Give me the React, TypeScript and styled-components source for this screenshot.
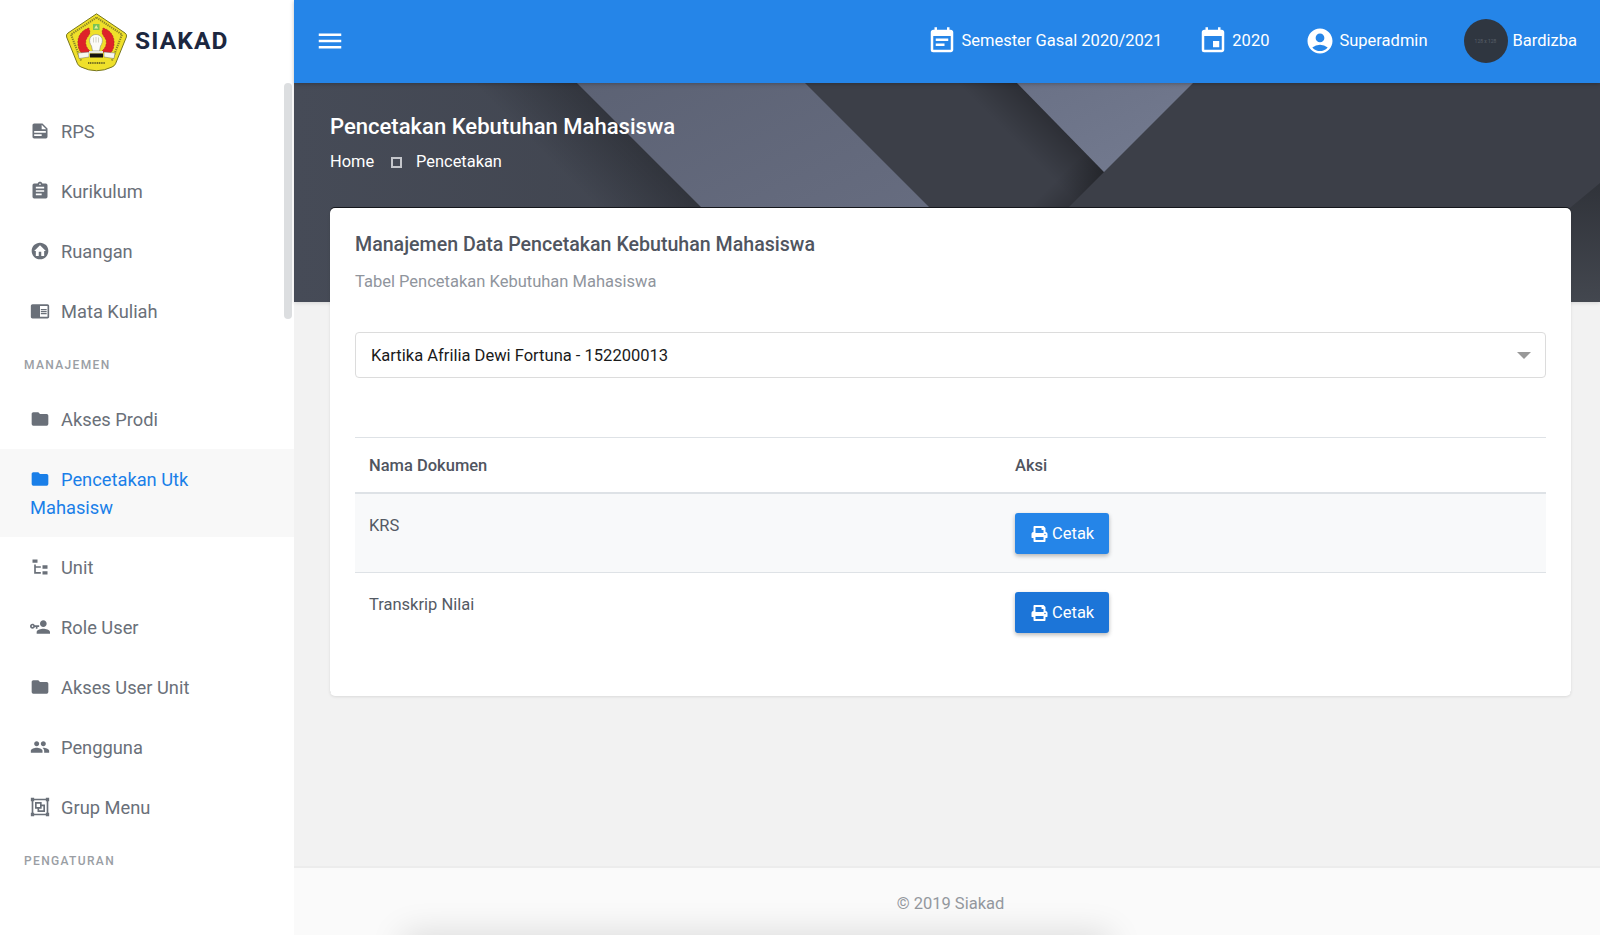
import React from "react";
import styled, { createGlobalStyle } from "styled-components";
import { MdEventNote, MdEvent, MdAccountCircle, MdMenu } from "react-icons/md";
import { FaPrint } from "react-icons/fa";

const Global = createGlobalStyle`
  html, body { margin: 0; padding: 0; background: #f2f2f2; }
  body { font-family: Roboto, "Liberation Sans", sans-serif; font-size: 16px; }
  * { box-sizing: border-box; }
`;

const Shell = styled.div`
  display: flex;
  width: 100%;
  height: 935px;
  overflow: hidden;
`;

const Sidebar = styled.aside`
  position: relative;
  flex: 0 0 294px;
  height: 935px;
  background: #fff;
  overflow: hidden;
`;

const Brand = styled.div`
  display: flex;
  align-items: center;
  gap: 7px;
  height: 83px;
  padding-left: 65px;
`;

const BrandLogo = styled.svg`
  display: block;
  width: 63px;
  height: 62px;
  margin-top: 3px;
`;

const BrandName = styled.span`
  margin-bottom: 3px;
  font-size: 24.5px;
  font-weight: 700;
  letter-spacing: 1.1px;
  color: #1c2740;
`;

const Nav = styled.nav`
  padding-top: 18px;
`;

const NavItem = styled.div<{ $active?: boolean }>`
  padding: 17px ${(p) => (p.$active ? "80px" : "20px")} 15px 30px;
  font-size: 18.3px;
  line-height: 28px;
  color: ${(p) => (p.$active ? "#1a7fe8" : "#6a7079")};
  background: ${(p) => (p.$active ? "#f8f8f8" : "transparent")};
`;

const NavGlyph = styled.svg`
  display: inline-block;
  width: 20px;
  height: 20px;
  margin-right: 11px;
  vertical-align: -3px;
  fill: currentColor;
`;

const NavSection = styled.div`
  height: 48px;
  padding-left: 24px;
  font-size: 12px;
  font-weight: 500;
  line-height: 48px;
  letter-spacing: 1.35px;
  text-transform: uppercase;
  color: #9a9ea4;
`;

const ScrollThumb = styled.div`
  position: absolute;
  top: 83px;
  right: 2px;
  width: 8px;
  height: 236px;
  border-radius: 4px;
  background: #dcdee0;
`;

const Main = styled.div`
  flex: 1 1 auto;
  min-width: 0;
  display: flex;
  flex-direction: column;
  height: 935px;
`;

const Topbar = styled.header`
  position: relative;
  z-index: 2;
  flex: 0 0 83px;
  display: flex;
  align-items: center;
  justify-content: space-between;
  padding: 0 23px 2px 21px;
  background: #2585e8;
  color: #fff;
  box-shadow: 0 1px 4px rgba(0, 0, 0, 0.25);
`;

const MenuIcon = styled(MdMenu)`
  width: 30px;
  height: 30px;
  display: block;
`;

const TopActions = styled.div`
  display: flex;
  align-items: center;
  gap: 36px;
`;

const TopItem = styled.div`
  display: flex;
  align-items: center;
  gap: 4px;
  font-size: 16.5px;
  svg {
    width: 30px;
    height: 30px;
    display: block;
  }
`;

const UserItem = styled.div`
  display: flex;
  align-items: center;
  gap: 5px;
  font-size: 16.5px;
`;

const Avatar = styled.div`
  width: 44px;
  height: 44px;
  border-radius: 50%;
  background: #2f3640;
  color: #59606a;
  font-size: 5px;
  display: flex;
  align-items: center;
  justify-content: center;
`;

const Hero = styled.section`
  position: relative;
  flex: 0 0 219px;
  padding: 29px 36px 0;
  background: #3c3f48;
  color: #fff;
  overflow: hidden;
  box-shadow: 0 1px 4px rgba(0, 0, 0, 0.12);
`;

const HeroArt = styled.svg`
  position: absolute;
  left: 0;
  top: 0;
  width: 1306px;
  height: 219px;
`;

const HeroTitle = styled.h1`
  position: relative;
  margin: 0;
  font-size: 22.05px;
  font-weight: 500;
  line-height: 30px;
`;

const Crumbs = styled.div`
  position: relative;
  display: flex;
  align-items: center;
  margin-top: 8px;
  font-size: 16.4px;
  line-height: 24px;
`;

const CrumbSeparator = styled.span`
  width: 11px;
  height: 11px;
  margin: 0 14px 0 17px;
  border: 2px solid #c4c6cb;
`;

const Card = styled.section`
  position: relative;
  z-index: 1;
  margin: -94px 29px 0 36px;
  padding: 25px;
  height: 488px;
  background: #fff;
  border-radius: 5px;
  box-shadow: 0 -1px 0 #15171c, 0 1px 3px rgba(0, 0, 0, 0.1);
`;

const CardTitle = styled.h2`
  margin: 0;
  font-size: 19.6px;
  font-weight: 500;
  line-height: 24px;
  color: #50555f;
`;

const CardSubtitle = styled.p`
  margin: 13px 0 0;
  font-size: 16.5px;
  line-height: 24px;
  color: #90959d;
`;

const SelectBox = styled.div`
  display: flex;
  align-items: center;
  justify-content: space-between;
  height: 46px;
  margin-top: 38px;
  padding: 0 14px 0 15px;
  border: 1px solid #dcdcdc;
  border-radius: 4px;
  font-size: 16.55px;
  color: #1a1a1a;
`;

const Caret = styled.span`
  width: 0;
  height: 0;
  border-left: 7.5px solid transparent;
  border-right: 7.5px solid transparent;
  border-top: 7.5px solid #999;
`;

const DocTable = styled.table`
  width: 100%;
  margin-top: 59px;
  border-collapse: collapse;
  border-top: 1px solid #dee2e6;
  table-layout: fixed;
  font-size: 16.5px;
  color: #545a64;
`;

const HeadCell = styled.th<{ $wide?: boolean }>`
  width: ${(p) => (p.$wide ? "646px" : "auto")};
  height: 55px;
  padding: 2px 14px 0;
  text-align: left;
  font-weight: 500;
  color: #50555f;
  border-bottom: 2px solid #dee2e6;
`;

const Row = styled.tr<{ $shade?: boolean }>`
  background: ${(p) => (p.$shade ? "#f8f9fa" : "transparent")};
  border-bottom: ${(p) => (p.$shade ? "1px solid #dee2e6" : "none")};
`;

const Cell = styled.td`
  padding: 19px 14px 18px;
  line-height: 24px;
  vertical-align: top;
`;

const TextCell = styled(Cell)`
  padding-top: 20px;
  padding-bottom: 17px;
`;

const PrintButton = styled.button<{ $dark?: boolean }>`
  display: flex;
  align-items: center;
  gap: 4px;
  height: 41px;
  width: 94px;
  padding: 1px 0 0 16px;
  border: 0;
  border-radius: 3px;
  background: ${(p) => (p.$dark ? "#1c75d8" : "#2585e8")};
  color: #fff;
  font: 400 16.5px Roboto, "Liberation Sans", sans-serif;
  box-shadow: 0 2px 4px rgba(0, 0, 0, 0.28);
  svg {
    width: 17px;
    height: 16px;
  }
`;

const Footer = styled.footer`
  position: relative;
  margin-top: auto;
  flex: 0 0 69px;
  padding: 24px 0 0 7px;
  background: #fafafa;
  border-top: 2px solid #ececec;
  text-align: center;
  font-size: 16.5px;
  line-height: 24px;
  color: #94989e;
  overflow: hidden;
  &::after {
    content: "";
    position: absolute;
    left: 115px;
    width: 695px;
    bottom: -22px;
    height: 16px;
    box-shadow: 0 0 34px 6px rgba(0, 0, 0, 0.15);
  }
`;

const P = {
  note: "M14,10H19.5L14,4.5V10M5,3H15L21,9V19A2,2 0 0,1 19,21H5C3.89,21 3,20.1 3,19V5C3,3.89 3.89,3 5,3M5,12V14H19V12H5M5,16V18H14V16H5Z",
  clip: "M17,9H7V7H17M17,13H7V11H17M14,17H7V15H14M12,3A1,1 0 0,1 13,4A1,1 0 0,1 12,5A1,1 0 0,1 11,4A1,1 0 0,1 12,3M19,3H14.82C14.4,1.84 13.3,1 12,1C10.7,1 9.6,1.84 9.18,3H5A2,2 0 0,0 3,5V19A2,2 0 0,0 5,21H19A2,2 0 0,0 21,19V5A2,2 0 0,0 19,3Z",
  home: "M19.07,4.93C17.22,3 14.66,1.96 12,2C9.34,1.96 6.79,3 4.94,4.93C3,6.78 1.96,9.34 2,12C1.96,14.66 3,17.21 4.93,19.06C6.78,21 9.34,22.04 12,22C14.66,22.04 17.21,21 19.06,19.07C21,17.22 22.04,14.66 22,12C22.04,9.34 21,6.78 19.07,4.93M17,12V18H13.5V13H10.5V18H7V12H5L12,5L19,12H17Z",
  book: "M13 12h7v1.5h-7zm0-2.5h7V11h-7zm0 5h7V16h-7zM21 4H3c-1.1 0-2 .9-2 2v13c0 1.1.9 2 2 2h18c1.1 0 2-.9 2-2V6c0-1.1-.9-2-2-2zm0 15h-9V6h9v13z",
  folder: "M10,4H4C2.89,4 2,4.89 2,6V18A2,2 0 0,0 4,20H20A2,2 0 0,0 22,18V8C22,6.89 21.1,6 20,6H12L10,4Z",
  tree: "M3,3H9V7H3V3M15,10H21V14H15V10M15,17H21V21H15V17M13,13H7V18H13V20H7L5,20V9H7V11H13V13Z",
  key: "M11 10V12H9V14H7V12H5.8C5.4 13.2 4.3 14 3 14C1.3 14 0 12.7 0 11S1.3 8 3 8C4.3 8 5.4 8.8 5.8 10H11M3 10C2.4 10 2 10.4 2 11S2.4 12 3 12 4 11.6 4 11 3.6 10 3 10M16 14C18.7 14 24 15.3 24 18V20H8V18C8 15.3 13.3 14 16 14M16 12C13.8 12 12 10.2 12 8S13.8 4 16 4 20 5.8 20 8 18.2 12 16 12Z",
  people: "M16 11c1.66 0 2.99-1.34 2.99-3S17.66 5 16 5s-3 1.34-3 3 1.34 3 3 3zm-8 0c1.66 0 2.99-1.34 2.99-3S9.66 5 8 5 5 6.34 5 8s1.34 3 3 3zm0 2c-2.33 0-7 1.17-7 3.5V19h14v-2.5c0-2.33-4.67-3.5-7-3.5zm8 0c-.29 0-.62.02-.97.05 1.16.84 1.97 1.97 1.97 3.45V19h6v-2.5c0-2.33-4.67-3.5-7-3.5z",
  group: "M1,1V5H2V19H1V23H5V22H19V23H23V19H22V5H23V1H19V2H5V1M5,4H19V5H20V19H19V20H5V19H4V5H5M6,6V14H9V18H18V9H14V6M8,8H12V12H8M14,11H16V16H11V14H14",
};

function Item({ icon, label, active }: { icon: string; label: string; active?: boolean }) {
  return (
    <NavItem $active={active}>
      <NavGlyph viewBox="0 0 24 24">
        <path d={icon} />
      </NavGlyph>
      {label}
    </NavItem>
  );
}

function Logo() {
  return (
    <BrandLogo viewBox="0 0 63 60" aria-hidden="true">
      <path
        d="M31.5 .8 L60 20 Q62.2 21.600 61.4 24 L50.5 50.8 Q49.5 53 47 54 Q31.5 61.5 16 54 Q13.500 53 12.500 50.8 L1.600 24 Q.8 21.600 3 20 Z"
        fill="#efe02a"
        stroke="#77761f"
        strokeWidth="1"
      />
      <path
        d="M31.5 4.500 L57 21.500 L47 47.500"
        fill="none"
        stroke="#8a8427"
        strokeWidth="2"
        strokeDasharray="1.300 .9"
      />
      <path
        d="M31.5 4.500 L6 21.500 L16 47.500"
        fill="none"
        stroke="#8a8427"
        strokeWidth="2"
        strokeDasharray="1.300 .9"
      />
      <path d="M28 11h6.500v6H28z" fill="#79c257" />
      <path d="M31.200 12l2 3.500h-4z" fill="#e3efa0" />
      <path
        d="M24 15C16 17 12 24 13 32C13.500 37 16 41 20 42L25 38C21.500 35 20 31 21 27C22 24 25 22 25 19Z"
        fill="#de2229"
        stroke="#9c1a1e"
        strokeWidth=".5"
        strokeDasharray="2 1"
      />
      <path
        d="M38 15C46 17 50 24 49 32C48.500 37 46 41 42 42L37 38C40.500 35 42 31 41 27C40 24 37 22 37 19Z"
        fill="#de2229"
        stroke="#9c1a1e"
        strokeWidth=".5"
        strokeDasharray="2 1"
      />
      <path
        d="M25 25C27 22 29 21.500 31 21.500S35 22 37 25C38 28 37 31 35.500 33L34.500 38H27.500L26.500 33C25 31 24 28 25 25Z"
        fill="#fbfbf6"
        stroke="#8b8b80"
        strokeWidth=".6"
      />
      <path d="M28.500 24.500v5M31 24v5.500M33.500 24.500v5" stroke="#b8b8a8" strokeWidth=".6" />
      <path d="M13 40l11-1v5l-10 1.500zM50 40l-11-1v5l10 1.500z" fill="#f7f7ee" stroke="#555" strokeWidth=".4" />
      <path d="M24 38h14v2.500H24z" fill="#e9e9df" />
      <path d="M25 40.500h13v4H25z" fill="#16130f" />
      <path d="M23 50h17" stroke="#4d4b1e" strokeWidth="1.600" strokeDasharray="1.200 .6" />
    </BrandLogo>
  );
}

function HeroBackdrop() {
  return (
    <HeroArt viewBox="0 0 1306 219" aria-hidden="true">
      <defs>
        <linearGradient id="baseLeft" x1="0" y1="0" x2="1" y2="0">
          <stop offset="0" stopColor="#464b57" />
          <stop offset="1" stopColor="#3f434d" />
        </linearGradient>
        <linearGradient id="edgeA" gradientUnits="userSpaceOnUse" x1="392" y1="110" x2="340" y2="162">
          <stop offset="0" stopColor="#000" stopOpacity=".24" />
          <stop offset="1" stopColor="#000" stopOpacity="0" />
        </linearGradient>
        <linearGradient id="edgeB" gradientUnits="userSpaceOnUse" x1="767" y1="44" x2="737" y2="74">
          <stop offset="0" stopColor="#000" stopOpacity=".26" />
          <stop offset="1" stopColor="#000" stopOpacity="0" />
        </linearGradient>
        <linearGradient id="edgeC" gradientUnits="userSpaceOnUse" x1="775" y1="124" x2="755" y2="104">
          <stop offset="0" stopColor="#000" stopOpacity=".2" />
          <stop offset="1" stopColor="#000" stopOpacity="0" />
        </linearGradient>
        <linearGradient id="shapeA" x1="0" y1="0" x2="1" y2="1">
          <stop offset="0" stopColor="#5c6274" />
          <stop offset="1" stopColor="#6b7185" />
        </linearGradient>
        <linearGradient id="shapeB" x1="0" y1="0" x2="1" y2="1">
          <stop offset="0" stopColor="#6a7186" />
          <stop offset="1" stopColor="#747b90" />
        </linearGradient>
        <linearGradient id="cornerFade" x1="0" y1="0" x2="0" y2="1">
          <stop offset="0" stopColor="#30333a" />
          <stop offset="1" stopColor="#43474f" />
        </linearGradient>
      </defs>
      <polygon points="0,0 283,0 502,219 0,219" fill="url(#baseLeft)" />
      <polygon points="0,0 283,0 502,219 0,219" fill="url(#edgeA)" />
      <polygon points="640,0 723,0 810,89 680,219 500,219" fill="url(#edgeB)" />
      <polygon points="640,0 723,0 810,89 680,219 500,219" fill="url(#edgeC)" />
      <polygon points="1306,100 1306,219 1170,219 1277,124" fill="url(#cornerFade)" />
      <polygon points="283,0 511,0 730,219 502,219" fill="url(#shapeA)" />
      <polygon points="723,0 899,0 810,89" fill="url(#shapeB)" />
    </HeroArt>
  );
}

export default function App() {
  return (
    <>
      <Global />
      <Shell>
        <Sidebar>
          <Brand>
            <Logo />
            <BrandName>SIAKAD</BrandName>
          </Brand>
          <Nav>
            <Item icon={P.note} label="RPS" />
            <Item icon={P.clip} label="Kurikulum" />
            <Item icon={P.home} label="Ruangan" />
            <Item icon={P.book} label="Mata Kuliah" />
            <NavSection>Manajemen</NavSection>
            <Item icon={P.folder} label="Akses Prodi" />
            <Item icon={P.folder} label="Pencetakan Utk Mahasisw" active />
            <Item icon={P.tree} label="Unit" />
            <Item icon={P.key} label="Role User" />
            <Item icon={P.folder} label="Akses User Unit" />
            <Item icon={P.people} label="Pengguna" />
            <Item icon={P.group} label="Grup Menu" />
            <NavSection>Pengaturan</NavSection>
          </Nav>
          <ScrollThumb />
        </Sidebar>
        <Main>
          <Topbar>
            <MenuIcon />
            <TopActions>
              <TopItem>
                <MdEventNote />
                Semester Gasal 2020/2021
              </TopItem>
              <TopItem>
                <MdEvent />
                2020
              </TopItem>
              <TopItem>
                <MdAccountCircle />
                Superadmin
              </TopItem>
              <UserItem>
                <Avatar>128 x 128</Avatar>
                Bardizba
              </UserItem>
            </TopActions>
          </Topbar>
          <Hero>
            <HeroBackdrop />
            <HeroTitle>Pencetakan Kebutuhan Mahasiswa</HeroTitle>
            <Crumbs>
              Home
              <CrumbSeparator />
              Pencetakan
            </Crumbs>
          </Hero>
          <Card>
            <CardTitle>Manajemen Data Pencetakan Kebutuhan Mahasiswa</CardTitle>
            <CardSubtitle>Tabel Pencetakan Kebutuhan Mahasiswa</CardSubtitle>
            <SelectBox>
              Kartika Afrilia Dewi Fortuna - 152200013
              <Caret />
            </SelectBox>
            <DocTable>
              <thead>
                <tr>
                  <HeadCell $wide>Nama Dokumen</HeadCell>
                  <HeadCell>Aksi</HeadCell>
                </tr>
              </thead>
              <tbody>
                <Row $shade>
                  <TextCell>KRS</TextCell>
                  <Cell>
                    <PrintButton>
                      <FaPrint />
                      Cetak
                    </PrintButton>
                  </Cell>
                </Row>
                <Row>
                  <TextCell>Transkrip Nilai</TextCell>
                  <Cell>
                    <PrintButton $dark>
                      <FaPrint />
                      Cetak
                    </PrintButton>
                  </Cell>
                </Row>
              </tbody>
            </DocTable>
          </Card>
          <Footer>© 2019 Siakad</Footer>
        </Main>
      </Shell>
    </>
  );
}
